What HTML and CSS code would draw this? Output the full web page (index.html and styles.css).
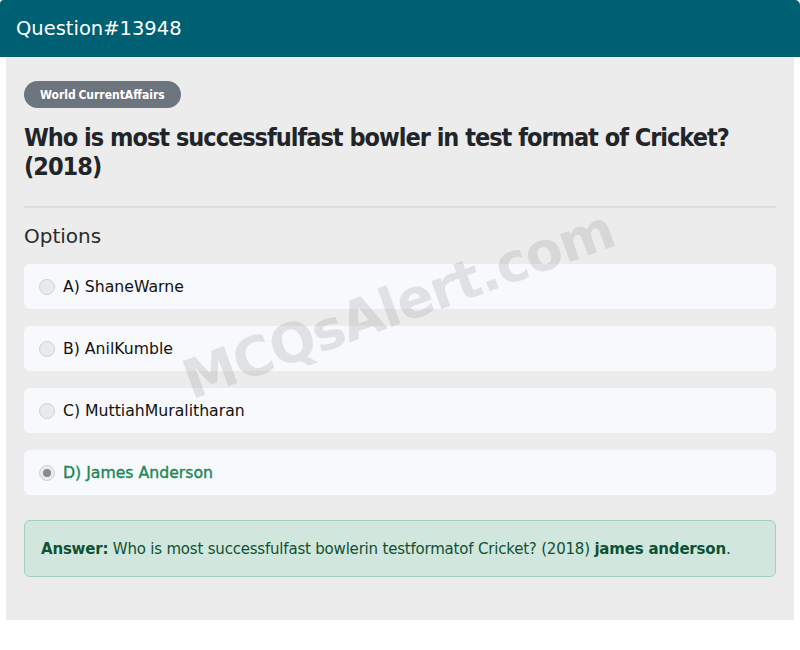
FILE: index.html
```html
<!DOCTYPE html>
<html>
<head>
<meta charset="utf-8">
<link rel="stylesheet" href="styles.css">
</head>
<body>
<div class="card">
  <div class="card-header">Question#13948</div>
  <div class="card-body">
    <span class="badge">World CurrentAffairs</span>
    <h1 class="question">Who is most successfulfast bowler in test format of Cricket? (2018)</h1>
    <hr class="divider">
    <h2 class="options-title">Options</h2>
    <div class="options">
      <label class="option"><span class="radio"></span><span class="opt-text">A) ShaneWarne</span></label>
      <label class="option"><span class="radio"></span><span class="opt-text">B) AnilKumble</span></label>
      <label class="option"><span class="radio"></span><span class="opt-text">C) MuttiahMuralitharan</span></label>
      <label class="option correct"><span class="radio checked"></span><span class="opt-text">D) James Anderson</span></label>
    </div>
    <div class="answer"><b>Answer:</b> Who is most successfulfast bowlerin testformatof Cricket? (2018) <b>james anderson</b>.</div>
    <div class="watermark">MCQsAlert.com</div>
  </div>
</div>
</body>
</html>
```

FILE: styles.css
```css
* { box-sizing: border-box; }
html, body { margin: 0; padding: 0; background: #ffffff; }
body { font-family: "DejaVu Sans", sans-serif; color: #212529; }

.card { width: 800px; }

.card-header {
  height: 57px;
  background: #006073;
  color: #ffffff;
  font-size: 19.5px;
  padding-left: 16px;
  display: flex;
  align-items: center;
  border-radius: 4px 5px 0 0;
}

.card-body {
  position: relative;
  margin: 0 6px;
  background: #ececec;
  padding: 24px 18px 43px;
  overflow: hidden;
}

.badge {
  display: inline-flex;
  align-items: center;
  height: 27px;
  padding: 0 16px;
  background: #6c757d;
  color: #ffffff;
  font-family: "DejaVu Sans Condensed", "DejaVu Sans", sans-serif;
  font-size: 12px;
  font-weight: bold;
  letter-spacing: 0;
  word-spacing: -1px;
  border-radius: 14px;
}

.question {
  margin: 15px 0 0;
  font-family: "DejaVu Sans Condensed", "DejaVu Sans", sans-serif;
  font-size: 25px;
  line-height: 29px;
  font-weight: bold;
  letter-spacing: -1px;
  color: #212529;
}

.divider {
  margin: 25px 0 0;
  border: 0;
  height: 2px;
  background: #dcdcdc;
}

.options-title {
  margin: 16px 0 0;
  font-size: 20px;
  font-weight: normal;
  line-height: 24px;
  color: #2b2b2b;
}

.options {
  margin-top: 16px;
  display: flex;
  flex-direction: column;
  gap: 17px;
}

.option {
  height: 45px;
  background: #f8f9fc;
  border-radius: 6px;
  display: flex;
  align-items: center;
  padding-left: 15px;
  font-size: 15.7px;
  color: #111111;
}

.radio {
  width: 16px;
  height: 16px;
  border-radius: 50%;
  border: 1px solid #cfd2d6;
  background: #e9eaec;
  margin-right: 8px;
  flex: none;
  display: flex;
  align-items: center;
  justify-content: center;
}

.radio.checked::after {
  content: "";
  width: 8px;
  height: 8px;
  border-radius: 50%;
  background: #8a8a8a;
}

.option.correct {
  color: #198754;
  font-weight: normal;
  -webkit-text-stroke: 0.35px #198754;
}

.answer {
  margin-top: 25px;
  height: 57px;
  background: #d1e7dd;
  border: 1px solid #a3cfbb;
  border-radius: 6px;
  color: #0f5132;
  font-size: 15px;
  letter-spacing: -0.2px;
  padding-left: 16px;
  display: flex;
  align-items: center;
  white-space: pre;
}
.answer b { font-weight: bold; }

.watermark {
  position: absolute;
  left: 190px;
  top: 292px;
  font-size: 54px;
  font-weight: bold;
  color: rgba(140, 140, 145, 0.22);
  transform: rotate(-20deg);
  transform-origin: left bottom;
  pointer-events: none;
  white-space: nowrap;
  letter-spacing: -1px;
}
```
